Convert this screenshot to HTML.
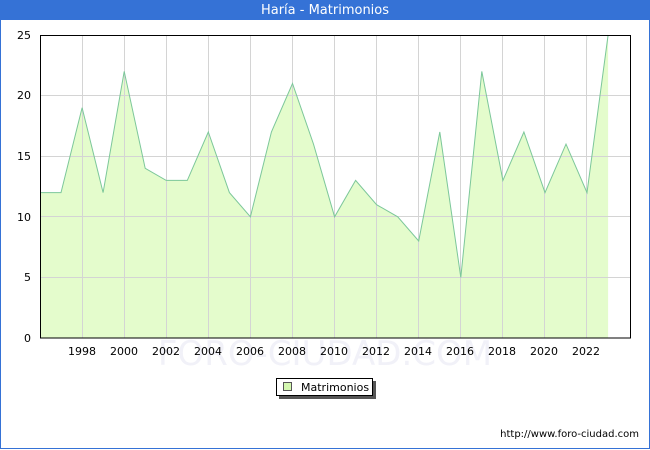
<!DOCTYPE html>
<html><head><style>
body{margin:0;background:#fff;}
.wrap{position:relative;width:648px;height:448px;border:1px solid #3572d6;border-top:none;}
.title{position:absolute;left:-1px;top:0;width:650px;height:20px;background:#3572d6;color:#fff;font:13px "DejaVu Sans","Liberation Sans",sans-serif;text-align:center;line-height:21px;}
svg{position:absolute;left:-1px;top:0;}
</style></head><body>
<div class="wrap">
<div class="title">Haría - Matrimonios</div>
<svg width="650" height="450" font-family="DejaVu Sans, Liberation Sans, sans-serif" font-size="11">
<text x="325" y="365" font-size="34" fill="#f1f1f8" text-anchor="middle">FORO-CIUDAD.COM</text>
<polygon fill="#e4fccc" points="40,338 40,192.6 61,192.6 82.1,107.7 103.1,192.6 124.2,71.4 145.2,168.3 166.2,180.4 187.3,180.4 208.3,132 229.4,192.6 250.4,216.8 271.4,132 292.5,83.5 313.5,144.1 334.6,216.8 355.6,180.4 376.6,204.7 397.7,216.8 418.7,241 439.8,132 460.8,277.4 481.8,71.4 502.9,180.4 523.9,132 545,192.6 566,144.1 587,192.6 608.1,35 608.1,338"/>
<g stroke="#d4d4d4" stroke-width="1">
<line x1="40" y1="277.5" x2="630" y2="277.5"/><line x1="40" y1="216.5" x2="630" y2="216.5"/><line x1="40" y1="156.5" x2="630" y2="156.5"/><line x1="40" y1="95.5" x2="630" y2="95.5"/>
<line x1="82.5" y1="35" x2="82.5" y2="338"/><line x1="124.5" y1="35" x2="124.5" y2="338"/><line x1="166.5" y1="35" x2="166.5" y2="338"/><line x1="208.5" y1="35" x2="208.5" y2="338"/><line x1="250.5" y1="35" x2="250.5" y2="338"/><line x1="292.5" y1="35" x2="292.5" y2="338"/><line x1="334.5" y1="35" x2="334.5" y2="338"/><line x1="376.5" y1="35" x2="376.5" y2="338"/><line x1="418.5" y1="35" x2="418.5" y2="338"/><line x1="460.5" y1="35" x2="460.5" y2="338"/><line x1="502.5" y1="35" x2="502.5" y2="338"/><line x1="544.5" y1="35" x2="544.5" y2="338"/><line x1="586.5" y1="35" x2="586.5" y2="338"/>
</g>
<polyline fill="none" stroke="#7cc79a" stroke-width="1" points="40,192.6 61,192.6 82.1,107.7 103.1,192.6 124.2,71.4 145.2,168.3 166.2,180.4 187.3,180.4 208.3,132 229.4,192.6 250.4,216.8 271.4,132 292.5,83.5 313.5,144.1 334.6,216.8 355.6,180.4 376.6,204.7 397.7,216.8 418.7,241 439.8,132 460.8,277.4 481.8,71.4 502.9,180.4 523.9,132 545,192.6 566,144.1 587,192.6 608.1,35"/>
<rect x="40.5" y="35.5" width="590" height="302.5" fill="none" stroke="#000" stroke-width="1"/>
<g text-anchor="end" fill="#000">
<text x="31" y="342">0</text><text x="31" y="281">5</text><text x="31" y="221">10</text><text x="31" y="160">15</text><text x="31" y="99">20</text><text x="31" y="39">25</text>
</g>
<g text-anchor="middle" fill="#000">
<text x="82" y="355">1998</text><text x="124" y="355">2000</text><text x="166" y="355">2002</text><text x="208" y="355">2004</text><text x="250" y="355">2006</text><text x="292" y="355">2008</text><text x="334" y="355">2010</text><text x="376" y="355">2012</text><text x="418" y="355">2014</text><text x="460" y="355">2016</text><text x="502" y="355">2018</text><text x="544" y="355">2020</text><text x="586" y="355">2022</text>
</g>
<rect x="279" y="381" width="97" height="18" fill="#555"/>
<rect x="276.5" y="378.5" width="96" height="17" fill="#fff" stroke="#000"/>
<rect x="283.5" y="382.5" width="8" height="8" fill="#d4f8b0" stroke="#555"/>
<text x="301" y="391" fill="#000">Matrimonios</text>
<text x="639" y="437" text-anchor="end" font-size="10" fill="#000">http://www.foro-ciudad.com</text>
</svg>
</div>
</body></html>
